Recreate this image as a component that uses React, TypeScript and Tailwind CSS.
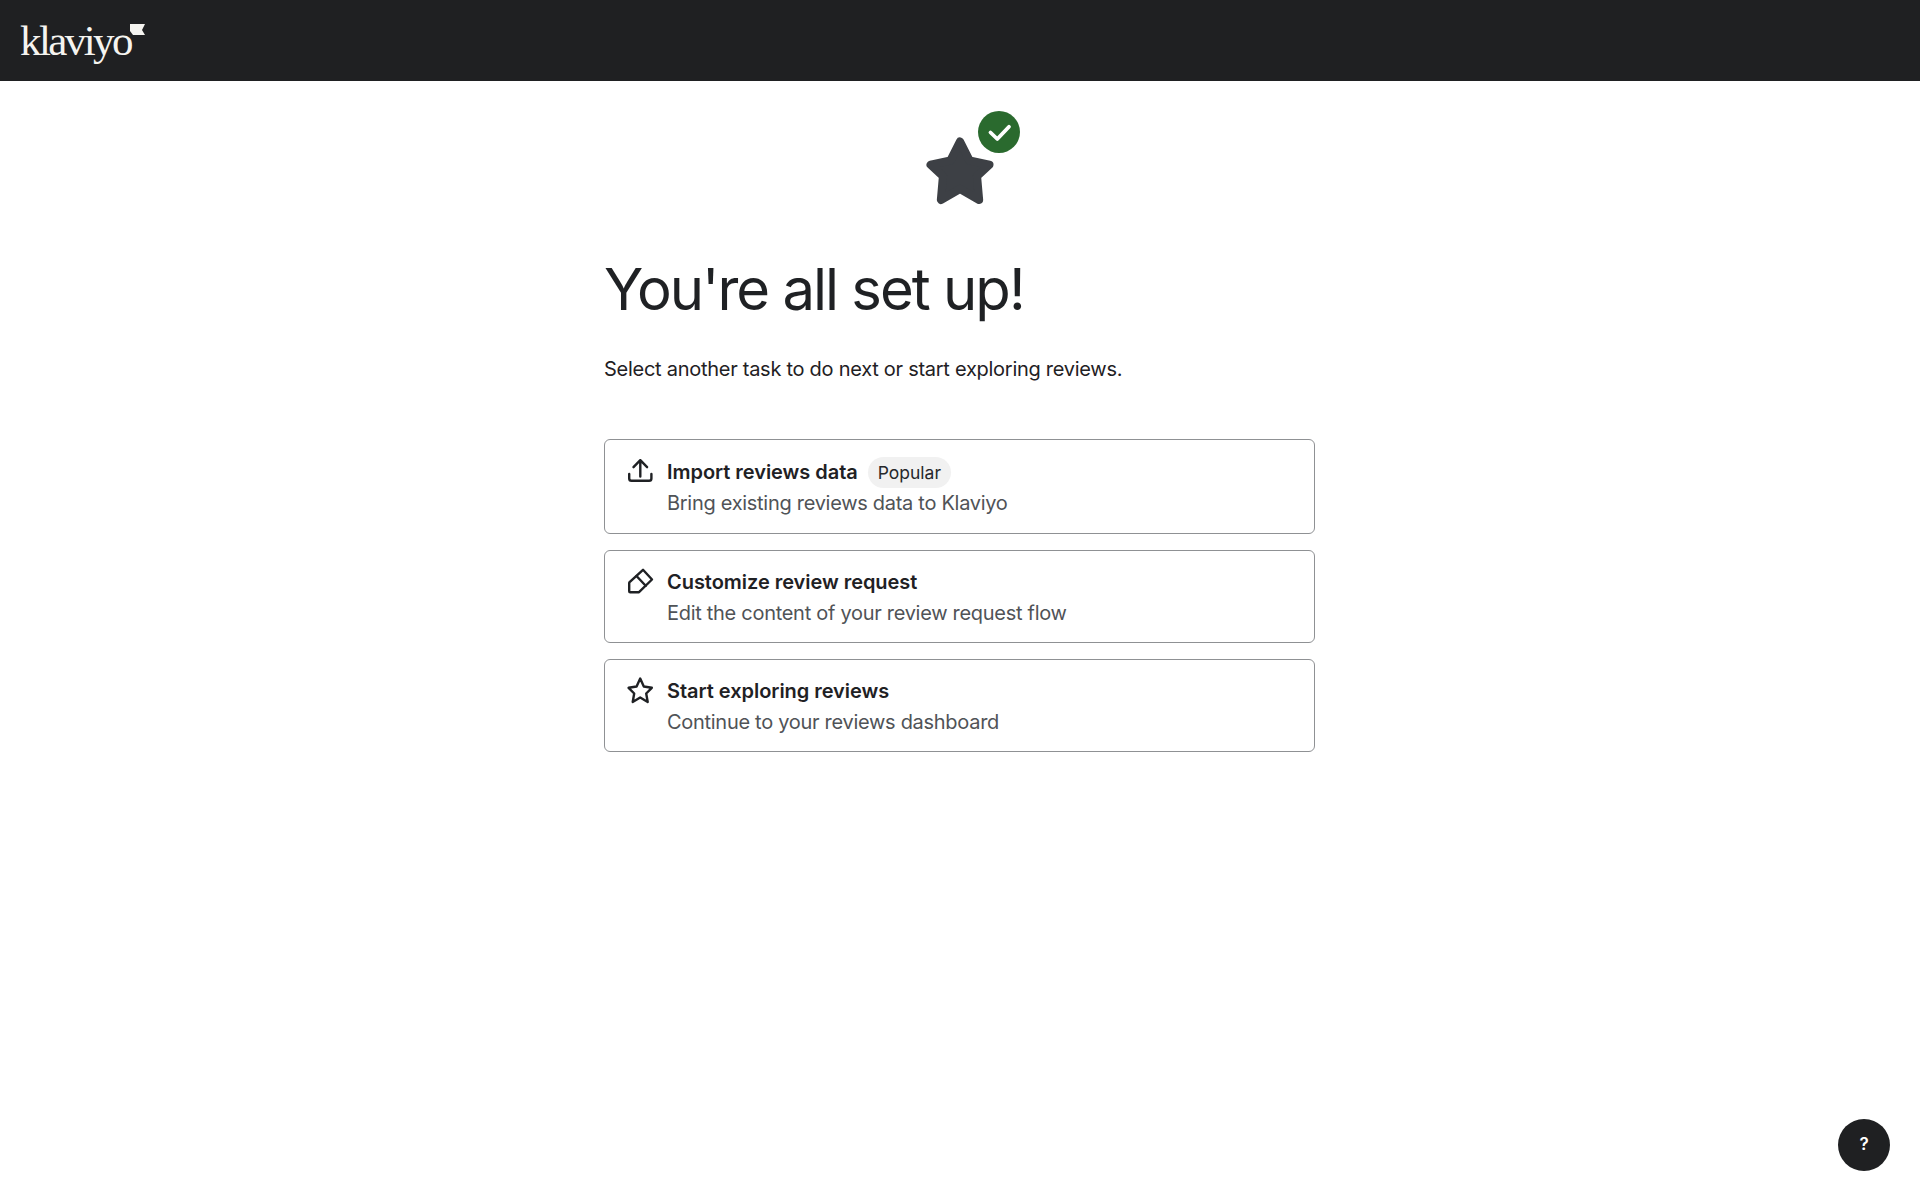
import React from "react";

function Upload() {
  return (
    <svg width="28" height="28" viewBox="0 0 28 28" fill="none" stroke="#1f2124" strokeWidth="2.400" strokeLinecap="round" strokeLinejoin="round">
      <path d="M13.300 19.500V3.200M6.500 10.200 13.300 3.200l6.800 7" />
      <path d="M2.200 17v4.500c0 1.500 1 2.300 2.300 2.300h17.600c1.300 0 2.300-.8 2.300-2.300V17" />
    </svg>
  );
}

function Pencil() {
  return (
    <svg width="28" height="28" viewBox="0 0 28 28" fill="none" stroke="#1f2124" strokeWidth="2.400" strokeLinecap="round" strokeLinejoin="round">
      <path d="M16 2.800 25 12.500 12 25.200H3.200c-.6 0-1-.4-1-1v-8c0-.4.1-.7.4-1z" />
      <path d="m9.500 9 9.200 9.800" />
    </svg>
  );
}

function StarOutline() {
  return (
    <svg width="28" height="28" viewBox="0 0 28 28" fill="none" stroke="#1f2124" strokeWidth="2.400" strokeLinejoin="round">
      <path d="M13.200 2.500 16.800 10.500 24.800 11.800 19.200 17.500 20.700 26 13.200 21.500 5.700 26 7.200 17.500 1.600 11.800 9.600 10.500z" />
    </svg>
  );
}

function HeroIcon() {
  return (
    <div className="relative w-[96px] h-[96px]">
      <svg className="absolute left-[2px] top-[25px]" width="68" height="70" viewBox="0 0 66 68">
        <polygon
          points="33,5.500 42.200,23.700 61.500,28 49.500,39.100 51.500,62 33,51.400 14.500,62 16.500,39.100 4.500,28 23.800,23.700"
          fill="#3d4045"
          stroke="#3d4045"
          strokeWidth="8"
          strokeLinejoin="round"
        />
      </svg>
      <div className="absolute left-[54px] top-[0px] w-[42px] h-[42px]">
        <svg width="42" height="42" viewBox="0 0 42 42">
          <circle cx="21" cy="21" r="21" fill="#2a6a2e" />
          <path d="M12.500 21.500 19.300 28 31 15.800" fill="none" stroke="#ffffff" strokeWidth="3.800" strokeLinecap="round" strokeLinejoin="round" />
        </svg>
      </div>
    </div>
  );
}

function Card({ icon, title, sub, badge, h }: { icon: React.ReactNode; title: string; sub: string; badge?: string; h: string }) {
  return (
    <div className={`w-full ${h} rounded-[6px] border border-[#8f9194] bg-white flex gap-[12px] pl-[22px] ${badge ? "pt-[16.500px]" : "pt-[15.500px]"}`}>
      <div className="w-[28px] h-[28px] shrink-0">{icon}</div>
      <div className="flex flex-col">
        <div className="flex items-center gap-[10px] h-[30px]">
          <span className="text-[20px] leading-[30px] font-semibold tracking-[-0.04px] text-[#1f2124]">{title}</span>
          {badge && (
            <span className="h-[31px] mt-[1px] px-[10px] rounded-full bg-[#f1f1f1] text-[17.500px] leading-[31px] text-[#26282b]">{badge}</span>
          )}
        </div>
        <span className="text-[20px] leading-[30px] tracking-[-0.29px] text-[#505357] mt-[1px]">{sub}</span>
      </div>
    </div>
  );
}

export default function App() {
  return (
    <div className="relative min-h-[1200px] bg-white" style={{ fontFamily: "Inter, 'Liberation Sans', sans-serif" }}>
      <header className="h-[81px] bg-[#1f2022] flex items-start pl-[20px]">
        <div className="flex items-start pt-[16px]">
          <span className="text-[43px] leading-[50px] text-[#f5f4f0] tracking-[-2.600px]" style={{ fontFamily: "'Liberation Serif', serif" }}>klaviyo</span>
          <svg className="mt-[8px] ml-[-1px]" width="15" height="12" viewBox="0 0 15 12">
            <path d="M0 0h15l-3 6 3 5H3L0 7z" fill="#f5f4f0" />
          </svg>
        </div>
      </header>
      <main className="w-[712px] mx-auto flex flex-col pr-[1px]">
        <div className="flex justify-center pt-[30px] pl-[24px]">
          <HeroIcon />
        </div>
        <h1 className="mt-[48px] text-[58px] leading-[68px] font-normal text-[#1f2124] tracking-[-2px]">You're all set up!</h1>
        <p className="mt-[31px] text-[20px] leading-[30px] tracking-[-0.27px] text-[#1f2124]">Select another task to do next or start exploring reviews.</p>
        <div className="mt-[55px] flex flex-col gap-[16px]">
          <Card h="h-[95px]" icon={<Upload />} title="Import reviews data" badge="Popular" sub="Bring existing reviews data to Klaviyo" />
          <Card h="h-[93px]" icon={<Pencil />} title="Customize review request" sub="Edit the content of your review request flow" />
          <Card h="h-[93px]" icon={<StarOutline />} title="Start exploring reviews" sub="Continue to your reviews dashboard" />
        </div>
      </main>
      <button className="absolute left-[1838px] top-[1119px] w-[52px] h-[52px] rounded-full bg-[#1f2022] text-white text-[17px] font-semibold flex items-center justify-center">?</button>
    </div>
  );
}
